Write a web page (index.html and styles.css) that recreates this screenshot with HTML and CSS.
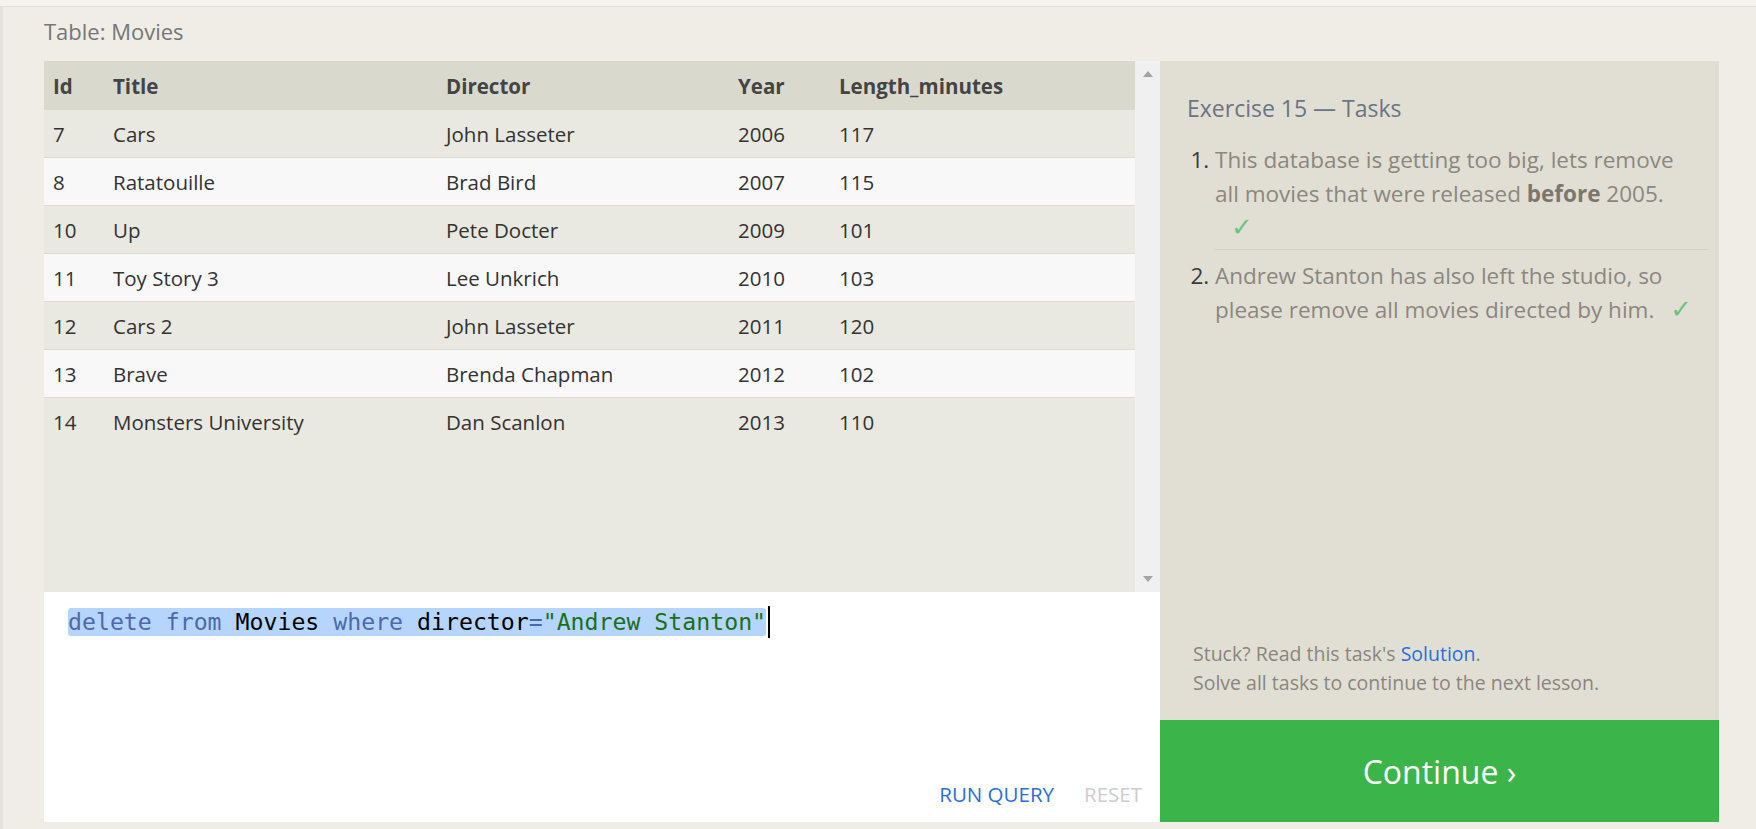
FILE: index.html
```html
<!DOCTYPE html>
<html lang="en">
<head>
<meta charset="utf-8">
<title>SQLBolt - Exercise 15</title>
<link rel="stylesheet" href="styles.css">
</head>
<body>
<div class="topbar"></div>
<div class="page">
  <div class="caption">Table: Movies</div>
  <div class="workspace">
    <div class="left">
      <div class="table-wrap">
        <div class="table">
          <div class="row head">
            <div class="cell">Id</div><div class="cell">Title</div><div class="cell">Director</div><div class="cell">Year</div><div class="cell">Length_minutes</div>
          </div>
          <div class="row dark"><div class="cell">7</div><div class="cell">Cars</div><div class="cell">John Lasseter</div><div class="cell">2006</div><div class="cell">117</div></div>
          <div class="row light"><div class="cell">8</div><div class="cell">Ratatouille</div><div class="cell">Brad Bird</div><div class="cell">2007</div><div class="cell">115</div></div>
          <div class="row dark"><div class="cell">10</div><div class="cell">Up</div><div class="cell">Pete Docter</div><div class="cell">2009</div><div class="cell">101</div></div>
          <div class="row light"><div class="cell">11</div><div class="cell">Toy Story 3</div><div class="cell">Lee Unkrich</div><div class="cell">2010</div><div class="cell">103</div></div>
          <div class="row dark"><div class="cell">12</div><div class="cell">Cars 2</div><div class="cell">John Lasseter</div><div class="cell">2011</div><div class="cell">120</div></div>
          <div class="row light"><div class="cell">13</div><div class="cell">Brave</div><div class="cell">Brenda Chapman</div><div class="cell">2012</div><div class="cell">102</div></div>
          <div class="row dark last"><div class="cell">14</div><div class="cell">Monsters University</div><div class="cell">Dan Scanlon</div><div class="cell">2013</div><div class="cell">110</div></div>
        </div>
        <div class="scrollbar">
          <span class="arrow up"></span>
          <span class="arrow down"></span>
        </div>
      </div>
      <div class="editor">
        <div class="code"><span class="sel"><span class="kw">delete</span> <span class="kw">from</span> Movies <span class="kw">where</span> director<span class="op">=</span><span class="str">"Andrew Stanton"</span></span><span class="caret"></span></div>
        <div class="actions">
          <span class="run">RUN QUERY</span>
          <span class="reset">RESET</span>
        </div>
      </div>
    </div>
    <div class="tasks">
      <div class="tasks-body">
        <h2 class="tasks-title">Exercise 15 — Tasks</h2>
        <ol class="task-list">
          <li class="task first">This database is getting too big, lets remove<br>all movies that were released <b>before</b> 2005.<br><span class="check">✓</span></li>
          <li class="task">Andrew Stanton has also left the studio, so<br>please remove all movies directed by him.<span class="check">✓</span></li>
        </ol>
      </div>
      <div class="hint">
        <div>Stuck? Read this task's <span class="link">Solution</span>.</div>
        <div>Solve all tasks to continue to the next lesson.</div>
      </div>
      <div class="continue">Continue ›</div>
    </div>
  </div>
</div>
</body>
</html>
```
FILE: styles.css
```css
* {
  box-sizing: border-box;
}

html,
body {
  margin: 0;
  padding: 0;
}

body {
  background: #efede6;
  font-family: "Open Sans", "Noto Sans", sans-serif;
  height: 829px;
  overflow: hidden;
}

.topbar {
  height: 7px;
  background: #f4f3f0;
  border-bottom: 1px solid #e2e0db;
}

.page {
  border-left: 3px solid #e4e2dd;
  padding: 0 37px 0 41px;
  height: 822px;
}

.caption {
  font-size: 22px;
  line-height: 30px;
  color: #767676;
  padding: 9px 0 15px;
}

.workspace {
  display: flex;
  height: 761px;
}

.left {
  width: 1116px;
  display: flex;
  flex-direction: column;
}

.table-wrap {
  height: 531px;
  display: flex;
  background: #e9e8e1;
}

.table {
  flex: 1;
}

.row {
  display: grid;
  grid-template-columns: 60px 333px 292px 101px 1fr;
  align-items: center;
  height: 48px;
  font-size: 20.5px;
  color: #333;
  border-bottom: 1px solid #dddcd4;
}

.row.head {
  height: 49px;
  background: #dad9ce;
  font-weight: 700;
  color: #444;
  border-bottom: none;
}

.row.dark {
  background: #e9e8e1;
}

.row.light {
  background: #f8f8f8;
}

.row.last {
  border-bottom: none;
}

.cell {
  padding-left: 9px;
  white-space: nowrap;
}

.scrollbar {
  width: 25px;
  background: #f0f0f0;
  display: flex;
  flex-direction: column;
  justify-content: space-between;
  align-items: center;
  padding: 10px 0 10px 1px;
}

.arrow {
  width: 0;
  height: 0;
  border-left: 5.5px solid transparent;
  border-right: 5.5px solid transparent;
}

.arrow.up {
  border-bottom: 6px solid #a3a3a3;
}

.arrow.down {
  border-top: 6px solid #a3a3a3;
}

.editor {
  flex: 1;
  background: #ffffff;
  display: flex;
  flex-direction: column;
  justify-content: space-between;
  padding: 14px 18px 14px 24px;
}

.code {
  font-family: "DejaVu Sans Mono", "Liberation Mono", monospace;
  font-size: 23.2px;
  line-height: 28px;
  color: #000;
  display: flex;
  align-items: center;
}

.sel {
  background: #b5d5fd;
  border-radius: 3px;
  white-space: pre;
}

.kw,
.op {
  color: #4d69aa;
}

.str {
  color: #1b6f1b;
}

.caret {
  display: inline-block;
  width: 2px;
  height: 32px;
  background: #000;
  margin-left: 2px;
}

.actions {
  display: flex;
  justify-content: flex-end;
  gap: 30px;
  font-size: 20.5px;
  line-height: 28px;
}

.run {
  color: #2b6de0;
}

.reset {
  color: #cdcdcd;
}

.tasks {
  width: 559px;
  background: #e1dfd4;
  display: flex;
  flex-direction: column;
}

.tasks-body {
  flex: 1;
  padding: 31px 11px 0 27px;
}

.tasks-title {
  margin: 0;
  font-weight: 400;
  font-size: 23px;
  line-height: 32px;
  color: #6b7482;
}

.task-list {
  margin: 19px 0 0;
  padding-left: 28px;
  font-size: 22.5px;
  line-height: 34px;
  color: #8b877f;
}

.task::marker {
  color: #3a3a3a;
}

.task b {
  color: #7b776f;
}

.task.first {
  padding-bottom: 4px;
  border-bottom: 1px solid #d2d0c5;
}

.task + .task {
  padding-top: 9px;
}

.check {
  color: #6cc47b;
  margin-left: 16px;
  font-family: "DejaVu Sans", sans-serif;
  font-size: 26px;
  line-height: 30px;
}

.hint {
  padding: 0 20px 23px 33px;
  font-size: 19.5px;
  line-height: 29px;
  color: #8a857e;
}

.link {
  color: #2b6de0;
}

.continue {
  height: 102px;
  background: #3bb44a;
  color: #ffffff;
  font-size: 32px;
  display: flex;
  align-items: center;
  justify-content: center;
}
```
